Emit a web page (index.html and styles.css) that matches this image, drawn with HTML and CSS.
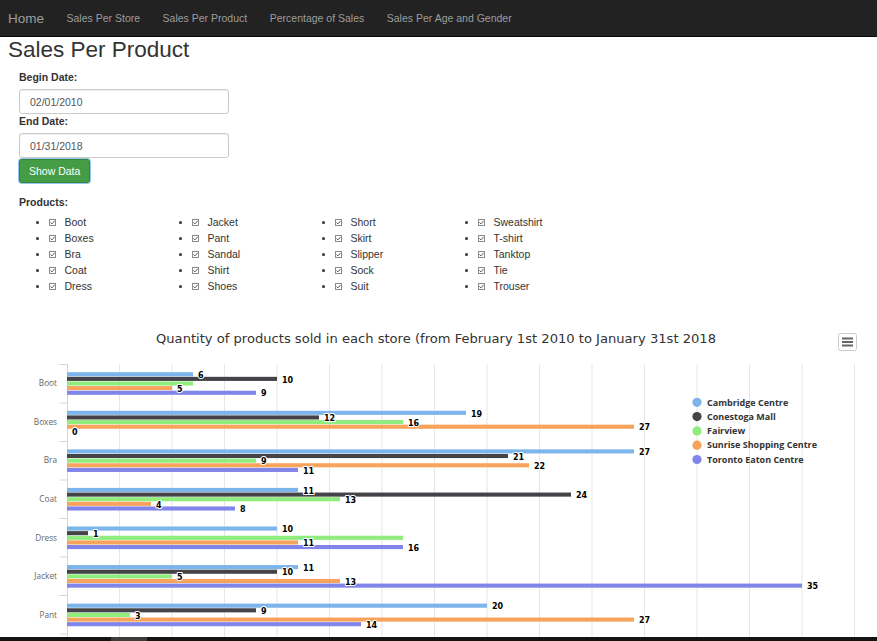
FILE: index.html
```html
<!DOCTYPE html>
<html lang="en">
<head>
<meta charset="utf-8">
<title>Sales Per Product</title>
<link rel="stylesheet" href="styles.css">
</head>
<body>
<nav class="navbar">
  <a class="brand" href="#">Home</a>
  <a class="nav-link" href="#">Sales Per Store</a>
  <a class="nav-link" href="#">Sales Per Product</a>
  <a class="nav-link" href="#">Percentage of Sales</a>
  <a class="nav-link" href="#">Sales Per Age and Gender</a>
</nav>
<main class="main">
  <h1 class="title">Sales Per Product</h1>
  <form class="form">
    <label class="lbl first">Begin Date:</label>
    <input class="inp" type="text" value="02/01/2010">
    <label class="lbl">End Date:</label>
    <input class="inp" type="text" value="01/31/2018">
    <button class="btn" type="button">Show Data</button>
    <label class="lbl products">Products:</label>
  </form>
  <ul class="plist">
    <li><span class="cb"><svg viewBox="0 0 7 7" width="7" height="7"><rect x="0.5" y="0.5" width="6" height="6" fill="#fff" stroke="#8a8a8a"/><path d="M1.5 3.5 L2.9 4.9 L5.5 2" fill="none" stroke="#444" stroke-width="0.9"/></svg></span>Boot</li>
    <li><span class="cb"><svg viewBox="0 0 7 7" width="7" height="7"><rect x="0.5" y="0.5" width="6" height="6" fill="#fff" stroke="#8a8a8a"/><path d="M1.5 3.5 L2.9 4.9 L5.5 2" fill="none" stroke="#444" stroke-width="0.9"/></svg></span>Boxes</li>
    <li><span class="cb"><svg viewBox="0 0 7 7" width="7" height="7"><rect x="0.5" y="0.5" width="6" height="6" fill="#fff" stroke="#8a8a8a"/><path d="M1.5 3.5 L2.9 4.9 L5.5 2" fill="none" stroke="#444" stroke-width="0.9"/></svg></span>Bra</li>
    <li><span class="cb"><svg viewBox="0 0 7 7" width="7" height="7"><rect x="0.5" y="0.5" width="6" height="6" fill="#fff" stroke="#8a8a8a"/><path d="M1.5 3.5 L2.9 4.9 L5.5 2" fill="none" stroke="#444" stroke-width="0.9"/></svg></span>Coat</li>
    <li><span class="cb"><svg viewBox="0 0 7 7" width="7" height="7"><rect x="0.5" y="0.5" width="6" height="6" fill="#fff" stroke="#8a8a8a"/><path d="M1.5 3.5 L2.9 4.9 L5.5 2" fill="none" stroke="#444" stroke-width="0.9"/></svg></span>Dress</li>
    <li><span class="cb"><svg viewBox="0 0 7 7" width="7" height="7"><rect x="0.5" y="0.5" width="6" height="6" fill="#fff" stroke="#8a8a8a"/><path d="M1.5 3.5 L2.9 4.9 L5.5 2" fill="none" stroke="#444" stroke-width="0.9"/></svg></span>Jacket</li>
    <li><span class="cb"><svg viewBox="0 0 7 7" width="7" height="7"><rect x="0.5" y="0.5" width="6" height="6" fill="#fff" stroke="#8a8a8a"/><path d="M1.5 3.5 L2.9 4.9 L5.5 2" fill="none" stroke="#444" stroke-width="0.9"/></svg></span>Pant</li>
    <li><span class="cb"><svg viewBox="0 0 7 7" width="7" height="7"><rect x="0.5" y="0.5" width="6" height="6" fill="#fff" stroke="#8a8a8a"/><path d="M1.5 3.5 L2.9 4.9 L5.5 2" fill="none" stroke="#444" stroke-width="0.9"/></svg></span>Sandal</li>
    <li><span class="cb"><svg viewBox="0 0 7 7" width="7" height="7"><rect x="0.5" y="0.5" width="6" height="6" fill="#fff" stroke="#8a8a8a"/><path d="M1.5 3.5 L2.9 4.9 L5.5 2" fill="none" stroke="#444" stroke-width="0.9"/></svg></span>Shirt</li>
    <li><span class="cb"><svg viewBox="0 0 7 7" width="7" height="7"><rect x="0.5" y="0.5" width="6" height="6" fill="#fff" stroke="#8a8a8a"/><path d="M1.5 3.5 L2.9 4.9 L5.5 2" fill="none" stroke="#444" stroke-width="0.9"/></svg></span>Shoes</li>
    <li><span class="cb"><svg viewBox="0 0 7 7" width="7" height="7"><rect x="0.5" y="0.5" width="6" height="6" fill="#fff" stroke="#8a8a8a"/><path d="M1.5 3.5 L2.9 4.9 L5.5 2" fill="none" stroke="#444" stroke-width="0.9"/></svg></span>Short</li>
    <li><span class="cb"><svg viewBox="0 0 7 7" width="7" height="7"><rect x="0.5" y="0.5" width="6" height="6" fill="#fff" stroke="#8a8a8a"/><path d="M1.5 3.5 L2.9 4.9 L5.5 2" fill="none" stroke="#444" stroke-width="0.9"/></svg></span>Skirt</li>
    <li><span class="cb"><svg viewBox="0 0 7 7" width="7" height="7"><rect x="0.5" y="0.5" width="6" height="6" fill="#fff" stroke="#8a8a8a"/><path d="M1.5 3.5 L2.9 4.9 L5.5 2" fill="none" stroke="#444" stroke-width="0.9"/></svg></span>Slipper</li>
    <li><span class="cb"><svg viewBox="0 0 7 7" width="7" height="7"><rect x="0.5" y="0.5" width="6" height="6" fill="#fff" stroke="#8a8a8a"/><path d="M1.5 3.5 L2.9 4.9 L5.5 2" fill="none" stroke="#444" stroke-width="0.9"/></svg></span>Sock</li>
    <li><span class="cb"><svg viewBox="0 0 7 7" width="7" height="7"><rect x="0.5" y="0.5" width="6" height="6" fill="#fff" stroke="#8a8a8a"/><path d="M1.5 3.5 L2.9 4.9 L5.5 2" fill="none" stroke="#444" stroke-width="0.9"/></svg></span>Suit</li>
    <li><span class="cb"><svg viewBox="0 0 7 7" width="7" height="7"><rect x="0.5" y="0.5" width="6" height="6" fill="#fff" stroke="#8a8a8a"/><path d="M1.5 3.5 L2.9 4.9 L5.5 2" fill="none" stroke="#444" stroke-width="0.9"/></svg></span>Sweatshirt</li>
    <li><span class="cb"><svg viewBox="0 0 7 7" width="7" height="7"><rect x="0.5" y="0.5" width="6" height="6" fill="#fff" stroke="#8a8a8a"/><path d="M1.5 3.5 L2.9 4.9 L5.5 2" fill="none" stroke="#444" stroke-width="0.9"/></svg></span>T-shirt</li>
    <li><span class="cb"><svg viewBox="0 0 7 7" width="7" height="7"><rect x="0.5" y="0.5" width="6" height="6" fill="#fff" stroke="#8a8a8a"/><path d="M1.5 3.5 L2.9 4.9 L5.5 2" fill="none" stroke="#444" stroke-width="0.9"/></svg></span>Tanktop</li>
    <li><span class="cb"><svg viewBox="0 0 7 7" width="7" height="7"><rect x="0.5" y="0.5" width="6" height="6" fill="#fff" stroke="#8a8a8a"/><path d="M1.5 3.5 L2.9 4.9 L5.5 2" fill="none" stroke="#444" stroke-width="0.9"/></svg></span>Tie</li>
    <li><span class="cb"><svg viewBox="0 0 7 7" width="7" height="7"><rect x="0.5" y="0.5" width="6" height="6" fill="#fff" stroke="#8a8a8a"/><path d="M1.5 3.5 L2.9 4.9 L5.5 2" fill="none" stroke="#444" stroke-width="0.9"/></svg></span>Trouser</li>
  </ul>
</main>
<svg class="chart" width="877" height="331" viewBox="0 310 877 331">
  <text class="ch-title" x="436" y="342.8" text-anchor="middle">Quantity of products sold in each store (from February 1st 2010 to January 31st 2018</text>
  <g class="menu-btn">
    <rect x="838.5" y="333.5" width="18" height="17" rx="2" ry="2" fill="#fff" stroke="#cccccc"/>
    <path d="M842 338.5 H853 M842 342 H853 M842 345.5 H853" stroke="#666" stroke-width="2"/>
  </g>
  <g class="grid" stroke="#e6e6e6" stroke-width="1">
    <path d="M119.5 364V641 M172 364V641 M224.5 364V641 M277 364V641 M329.5 364V641 M382 364V641 M434.5 364V641 M487 364V641 M539.5 364V641 M592 364V641 M644.5 364V641 M697 364V641 M749.5 364V641 M802 364V641 M854.5 364V641"/>
  </g>
  <g class="axis" stroke="#ccd6eb" stroke-width="1">
    <path d="M67.5 364V641"/>
    <path d="M59.5 364.5H67 M59.5 403H67 M59.5 441.5H67 M59.5 480H67 M59.5 518.5H67 M59.5 557H67 M59.5 595.5H67 M59.5 634H67"/>
  </g>
  <g class="cats" text-anchor="end">
    <text x="57" y="386.3">Boot</text>
    <text x="57" y="424.9">Boxes</text>
    <text x="57" y="463.4">Bra</text>
    <text x="57" y="502">Coat</text>
    <text x="57" y="540.6">Dress</text>
    <text x="57" y="579.2">Jacket</text>
    <text x="57" y="617.7">Pant</text>
  </g>
  <g class="bars">
    <g fill="#7cb5ec">
      <rect x="67" y="372.2" width="126" height="4.1"/>
      <rect x="67" y="410.77" width="399" height="4.1"/>
      <rect x="67" y="449.34" width="567" height="4.1"/>
      <rect x="67" y="487.91" width="231" height="4.1"/>
      <rect x="67" y="526.49" width="210" height="4.1"/>
      <rect x="67" y="565.06" width="231" height="4.1"/>
      <rect x="67" y="603.63" width="420" height="4.1"/>
    </g>
    <g fill="#434348">
      <rect x="67" y="376.83" width="210" height="4.1"/>
      <rect x="67" y="415.4" width="252" height="4.1"/>
      <rect x="67" y="453.97" width="441" height="4.1"/>
      <rect x="67" y="492.54" width="504" height="4.1"/>
      <rect x="67" y="531.12" width="21" height="4.1"/>
      <rect x="67" y="569.69" width="210" height="4.1"/>
      <rect x="67" y="608.26" width="189" height="4.1"/>
    </g>
    <g fill="#90ed7d">
      <rect x="67" y="381.46" width="126" height="4.1"/>
      <rect x="67" y="420.03" width="336" height="4.1"/>
      <rect x="67" y="458.6" width="189" height="4.1"/>
      <rect x="67" y="497.17" width="273" height="4.1"/>
      <rect x="67" y="535.75" width="336" height="4.1"/>
      <rect x="67" y="574.32" width="105" height="4.1"/>
      <rect x="67" y="612.89" width="63" height="4.1"/>
    </g>
    <g fill="#f7a35c">
      <rect x="67" y="386.09" width="105" height="4.1"/>
      <rect x="67" y="424.66" width="567" height="4.1"/>
      <rect x="67" y="463.23" width="462" height="4.1"/>
      <rect x="67" y="501.8" width="84" height="4.1"/>
      <rect x="67" y="540.38" width="231" height="4.1"/>
      <rect x="67" y="578.95" width="273" height="4.1"/>
      <rect x="67" y="617.52" width="567" height="4.1"/>
    </g>
    <g fill="#8085e9">
      <rect x="67" y="390.72" width="189" height="4.1"/>
      <rect x="67" y="467.86" width="231" height="4.1"/>
      <rect x="67" y="506.43" width="168" height="4.1"/>
      <rect x="67" y="545.01" width="336" height="4.1"/>
      <rect x="67" y="583.58" width="735" height="4.1"/>
      <rect x="67" y="622.15" width="294" height="4.1"/>
    </g>
  </g>
  <g class="dlabels">
    <text x="198" y="377.95">6</text>
    <text x="471" y="416.52">19</text>
    <text x="639" y="455.09">27</text>
    <text x="303" y="493.66">11</text>
    <text x="282" y="532.24">10</text>
    <text x="303" y="570.81">11</text>
    <text x="492" y="609.38">20</text>

    <text x="282" y="382.58">10</text>
    <text x="324" y="421.15">12</text>
    <text x="513" y="459.72">21</text>
    <text x="576" y="498.29">24</text>
    <text x="93" y="536.87">1</text>
    <text x="282" y="575.44">10</text>
    <text x="261" y="614.01">9</text>

    <text x="408" y="425.78">16</text>
    <text x="261" y="464.35">9</text>
    <text x="345" y="502.92">13</text>
    <text x="177" y="580.07">5</text>
    <text x="135" y="618.64">3</text>

    <text x="177" y="391.84">5</text>
    <text x="639" y="430.41">27</text>
    <text x="534" y="468.98">22</text>
    <text x="156" y="507.55">4</text>
    <text x="303" y="546.13">11</text>
    <text x="345" y="584.7">13</text>
    <text x="639" y="623.27">27</text>

    <text x="261" y="396.47">9</text>
    <text x="72" y="435.04">0</text>
    <text x="303" y="473.61">11</text>
    <text x="240" y="512.18">8</text>
    <text x="408" y="550.76">16</text>
    <text x="807" y="589.33">35</text>
    <text x="366" y="627.9">14</text>
  </g>
  <g class="legend">
    <circle cx="697" cy="402.3" r="4.6" fill="#7cb5ec"/>
    <text x="707" y="405.5">Cambridge Centre</text>
    <circle cx="697" cy="416.6" r="4.6" fill="#434348"/>
    <text x="707" y="419.8">Conestoga Mall</text>
    <circle cx="697" cy="430.9" r="4.6" fill="#90ed7d"/>
    <text x="707" y="434.1">Fairview</text>
    <circle cx="697" cy="445.2" r="4.6" fill="#f7a35c"/>
    <text x="707" y="448.4">Sunrise Shopping Centre</text>
    <circle cx="697" cy="459.5" r="4.6" fill="#8085e9"/>
    <text x="707" y="462.7">Toronto Eaton Centre</text>
  </g>
</svg>
<div class="hscroll"><div class="hscroll-thumb"></div></div>
</body>
</html>
```
FILE: styles.css
```css
html, body {
  margin: 0;
  padding: 0;
  overflow: hidden;
  background: #fff;
}
body {
  font-family: "Liberation Sans", Arial, sans-serif;
  font-size: 10.5px;
  line-height: 15px;
  color: #333;
}
.navbar {
  display: flex;
  align-items: center;
  height: 36px;
  background: #222;
  border-bottom: 1px solid #080808;
}
.navbar a {
  text-decoration: none;
  color: #9d9d9d;
}
.brand {
  font-size: 13.5px;
  padding: 1px 11.25px 0 8px;
}
.nav-link {
  font-size: 10.5px;
  padding: 1px 11.25px 0;
}
.main {
  padding: 0 8px;
}
.title {
  margin: 0;
  font-size: 22.5px;
  line-height: 25px;
  font-weight: normal;
  color: #333;
}
.form {
  display: flex;
  flex-direction: column;
  align-items: flex-start;
  padding-left: 11px;
}
.lbl {
  display: block;
  font-weight: bold;
  margin-bottom: 4px;
}
.lbl.first {
  margin-top: 8px;
}
.lbl.products {
  margin-top: 11.7px;
  margin-bottom: 4.4px;
}
.inp {
  box-sizing: border-box;
  width: 210px;
  height: 25px;
  margin: 0;
  padding: 0 10px;
  border: 1px solid #ccc;
  border-radius: 3px;
  box-shadow: inset 0 1px 1px rgba(0,0,0,.075);
  font-family: "Liberation Sans", Arial, sans-serif;
  font-size: 10.5px;
  color: #555;
  background: #fff;
}
.btn {
  box-sizing: border-box;
  height: 24px;
  margin-top: 1px;
  padding: 0 9px;
  border: 1px solid #398439;
  border-radius: 3px;
  background: #449d44;
  color: #fff;
  font-family: "Liberation Sans", Arial, sans-serif;
  font-size: 10.5px;
  line-height: 22px;
  box-shadow: 0 0 0 1px rgba(102,175,233,.7);
}
.plist {
  list-style: none;
  margin: 0;
  padding: 0 0 0 28px;
  display: grid;
  grid-template-columns: repeat(4, 143px);
  grid-template-rows: repeat(5, 16px);
  grid-auto-flow: column;
}
.plist li {
  display: flex;
  align-items: center;
  line-height: 16px;
}
.plist li::before {
  content: "";
  width: 3px;
  height: 3px;
  border-radius: 50%;
  background: #333;
  margin-right: 10px;
}
.cb {
  display: flex;
  width: 7px;
  height: 7px;
  margin-right: 8.5px;
}
.chart {
  display: block;
  margin-top: 15.6px;
}
.ch-title {
  font-family: "DejaVu Sans", sans-serif;
  font-size: 13.1px;
  fill: #333;
}
.cats text {
  font-family: "Open Sans", sans-serif;
  font-size: 8.25px;
  fill: #666;
}
.dlabels text {
  font-family: "DejaVu Sans", sans-serif;
  font-size: 8px;
  font-weight: bold;
  fill: #000;
  stroke: #fff;
  stroke-width: 2px;
  stroke-linejoin: round;
  paint-order: stroke;
}
.legend text {
  font-family: "Open Sans", sans-serif;
  font-size: 9px;
  font-weight: bold;
  fill: #333;
}
.hscroll {
  position: fixed;
  left: 0;
  right: 0;
  bottom: 0;
  height: 4px;
  background: #141414;
}
.hscroll-thumb {
  position: absolute;
  left: 111px;
  top: 0;
  width: 36px;
  height: 4px;
  background: #3c3c3c;
}
```
